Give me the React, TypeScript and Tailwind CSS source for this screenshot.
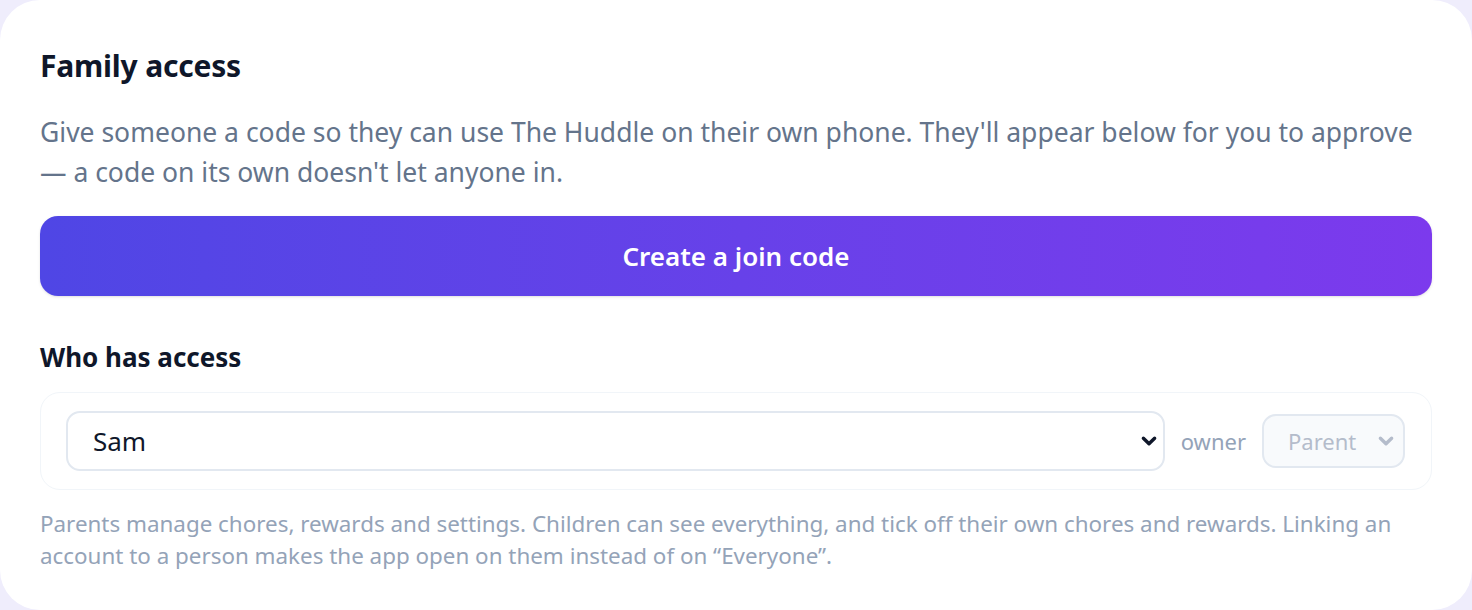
const font = { fontFamily: '"Noto Sans", "Open Sans", sans-serif' };

function Chevron({ className }: { className?: string }) {
  return (
    <svg
      viewBox="0 0 16 16"
      className={className}
      fill="none"
      stroke="currentColor"
      strokeWidth={3}
      strokeLinecap="round"
      strokeLinejoin="round"
    >
      <path d="M3 5.5l5 5 5-5" />
    </svg>
  );
}

export default function App() {
  return (
    <div className="h-[610px] bg-[#efedfc]" style={font}>
      <div className="h-full rounded-[40px] bg-white px-10 pt-12">
        <h2 className="text-[30px] leading-9 font-bold tracking-[-0.2px] text-[#0f172a]">
          Family access
        </h2>
        <p className="mt-7 text-[26.5px] leading-10 text-[#64748b]">
          Give someone a code so they can use The Huddle on their own phone.
          They'll appear below for you to approve — a code on its own doesn't
          let anyone in.
        </p>
        <button className="mt-6 flex h-20 w-full items-center justify-center rounded-[18px] bg-gradient-to-r from-[#4f46e5] to-[#7c3aed] text-[26px] font-semibold text-white shadow-sm">
          Create a join code
        </button>

        <h3 className="mt-[45px] text-[26px] leading-8 font-bold text-[#0f172a]">
          Who has access
        </h3>
        <div className="mt-[19px] flex items-center gap-4 rounded-[20px] border border-[#f1f5f9] py-[18px] pl-[25px] pr-[26px]">
          <div className="relative flex h-[60px] flex-1 items-center rounded-[14px] border-2 border-[#e2e8f0] pl-[25px] pr-4">
            <span className="text-[26px] text-[#0f172a]">Sam</span>
            <Chevron className="absolute right-[5px] h-[18px] w-[18px] text-[#0f172a]" />
          </div>
          <span className="text-[22px] text-[#94a3b8]">owner</span>
          <div className="relative flex h-[54px] w-[143px] items-center rounded-[14px] border-2 border-[#e2e8f0] bg-[#f8fafc] pl-6">
            <span className="text-[22px] text-[#b4bccb]">Parent</span>
            <Chevron className="absolute right-[8px] h-[18px] w-[18px] text-[#b4bccb]" />
          </div>
        </div>
        <p className="mt-[18px] text-[22.4px] leading-8 text-[#94a3b8]">
          Parents manage chores, rewards and settings. Children can see
          everything, and tick off their own chores and rewards. Linking an
          account to a person makes the app open on them instead of on
          “Everyone”.
        </p>
      </div>
    </div>
  );
}
